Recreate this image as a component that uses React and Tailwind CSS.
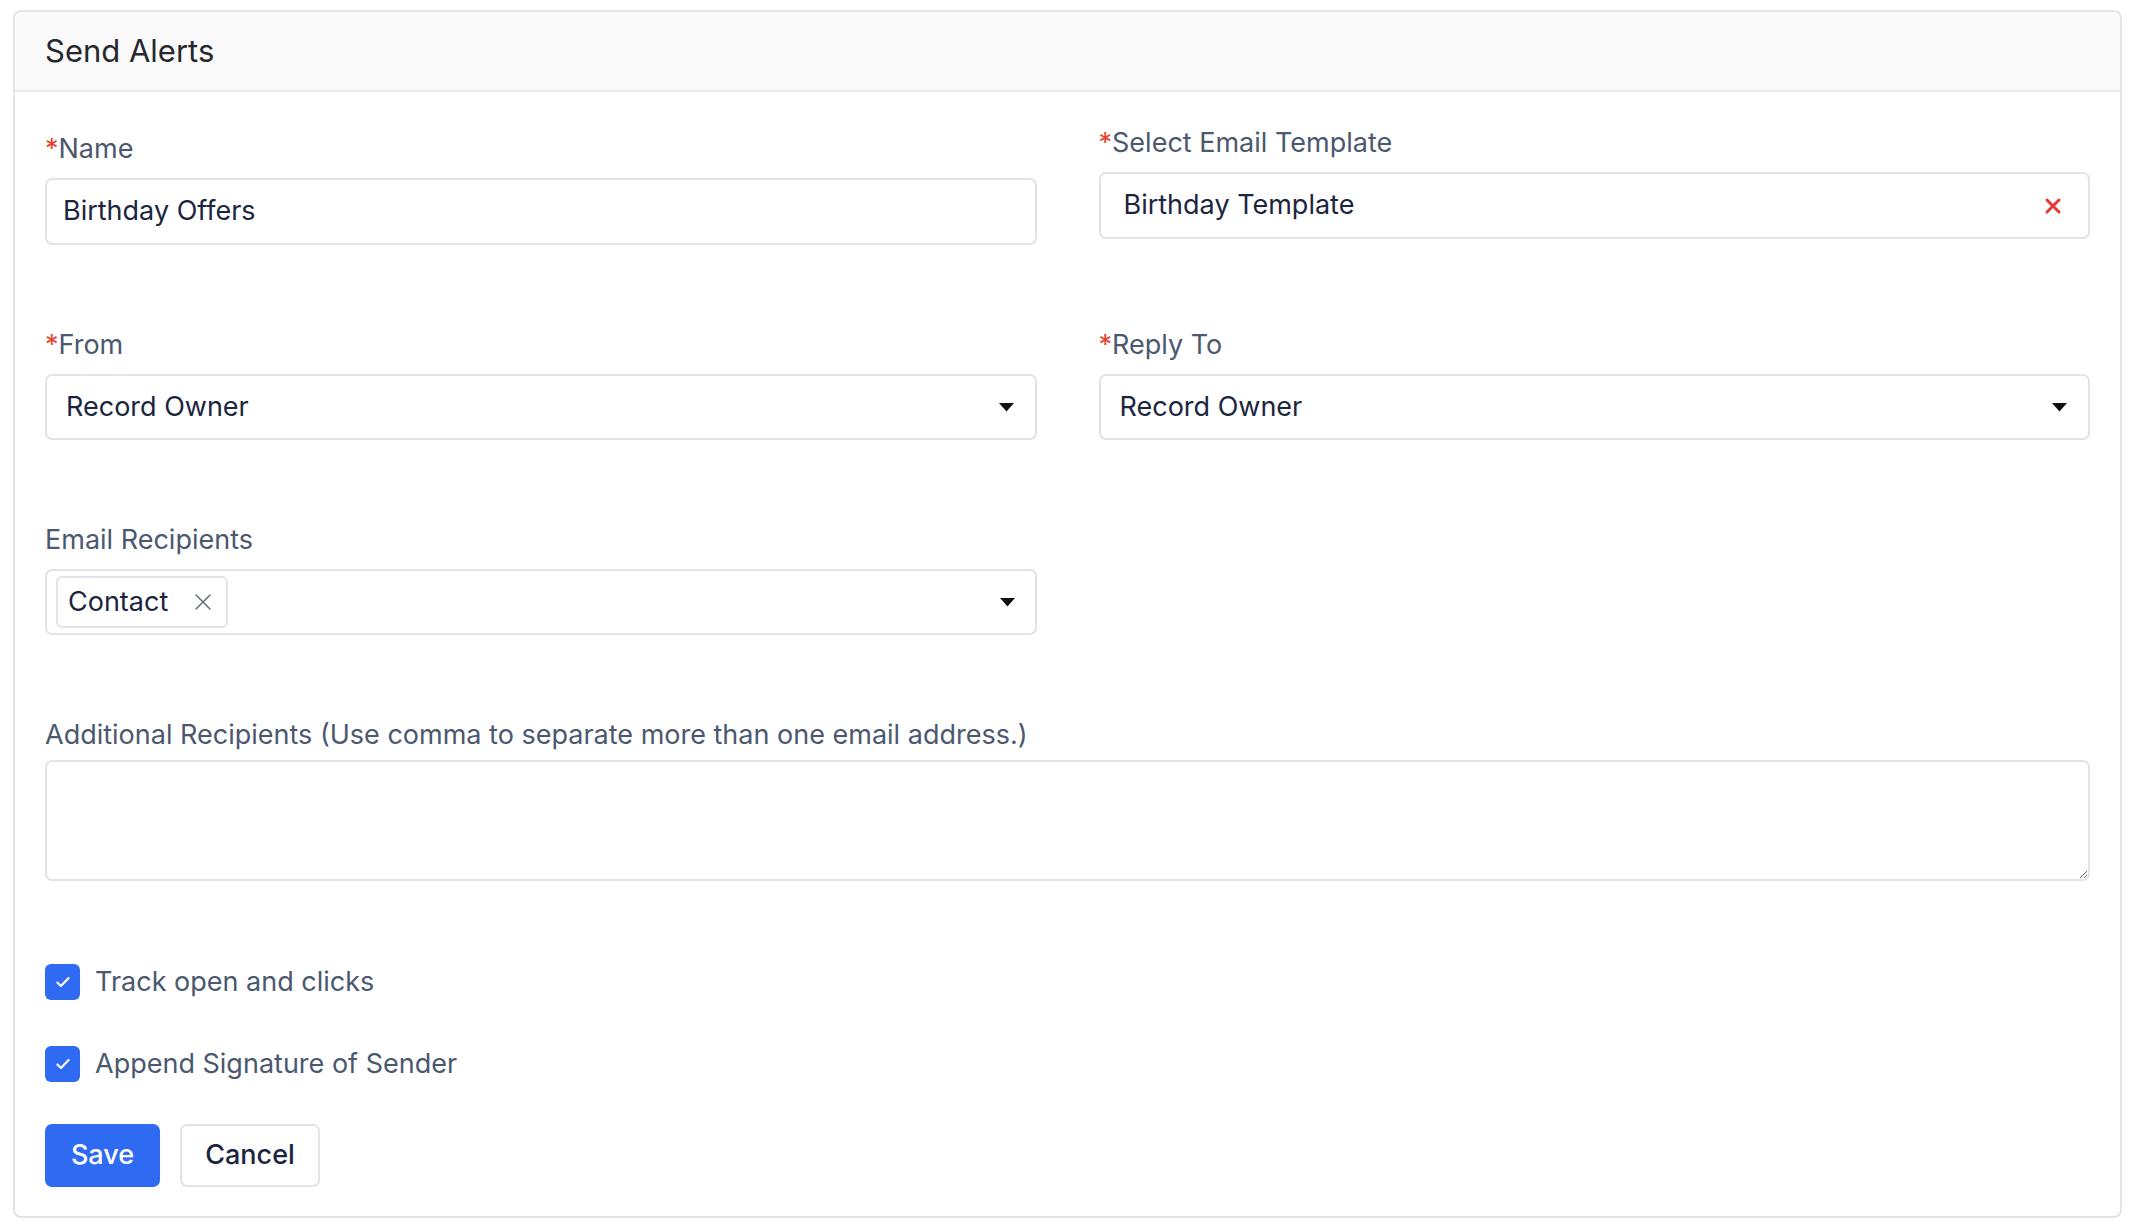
import React from "react";

const Label = ({ required, children }) => (
  <div className="h-[34px] mb-3 text-[27px] leading-[34px] text-[#4b5870]">
    {required && <span className="text-[#e5442e]">*</span>}
    {children}
  </div>
);

const Caret = () => (
  <svg width="17" height="10" viewBox="0 0 17 10" className="shrink-0">
    <path d="M1 1h15L8.5 9.5z" fill="#111" />
  </svg>
);

const Checkbox = ({ label }) => (
  <label className="h-[36px] flex items-center gap-[15px]">
    <span className="w-[35px] h-[36px] rounded-[6px] bg-[#2f6af3] flex items-center justify-center">
      <svg width="18" height="18" viewBox="0 0 16 16" fill="none">
        <path d="M3 8.5l3.2 3L13 4.5" stroke="#fff" strokeWidth="1.9" strokeLinecap="round" strokeLinejoin="round" />
      </svg>
    </span>
    <span className="text-[27px] leading-[36px] text-[#4b5870]">{label}</span>
  </label>
);

export default function App() {
  return (
    <div className="min-h-screen bg-white pl-[13px] pr-[14px] pt-[10px] font-['Inter','Noto_Sans',sans-serif]">
      <div className="border-2 border-[#e4e4e8] rounded-[8px] overflow-hidden">
        {/* Header */}
        <div className="h-[80px] bg-[#fafafa] border-b-2 border-[#ececef] px-[30px] flex items-center">
          <h1 className="text-[31px] font-normal text-[#26282e]">Send Alerts</h1>
        </div>

        <div className="px-[30px] pt-[34px] pb-[29px]">
          <div className="grid grid-cols-2 gap-x-[62px] gap-y-[83px]">
            {/* Name */}
            <div className="pt-[6px]">
              <Label required>Name</Label>
              <div className="h-[67px] border-2 border-[#e2e3e8] rounded-[7px] px-[16px] flex items-center text-[27px] text-[#1c2540]">
                Birthday Offers
              </div>
            </div>

            {/* Template */}
            <div>
              <Label required>Select Email Template</Label>
              <div className="h-[67px] border-2 border-[#e2e3e8] rounded-[7px] pl-[23px] pr-[26px] flex items-center justify-between text-[27px] text-[#1c2540]">
                <span>Birthday Template</span>
                <svg width="18" height="18" viewBox="0 0 18 18">
                  <path d="M3 3l12 12M15 3L3 15" stroke="#e53935" strokeWidth="3" strokeLinecap="round" />
                </svg>
              </div>
            </div>

            {/* From */}
            <div>
              <Label required>From</Label>
              <div className="h-[66px] border-2 border-[#e2e3e8] rounded-[7px] pl-[19px] pr-[20px] flex items-center justify-between text-[27px] text-[#1c2540]">
                <span>Record Owner</span>
                <Caret />
              </div>
            </div>

            {/* Reply To */}
            <div>
              <Label required>Reply To</Label>
              <div className="h-[66px] border-2 border-[#e2e3e8] rounded-[7px] pl-[19px] pr-[20px] flex items-center justify-between text-[27px] text-[#1c2540]">
                <span>Record Owner</span>
                <Caret />
              </div>
            </div>

            {/* Email Recipients */}
            <div>
              <Label>Email Recipients</Label>
              <div className="h-[66px] border-2 border-[#e2e3e8] rounded-[7px] pl-[9px] pr-[19px] flex items-center justify-between">
                <span className="h-[52px] border-2 border-[#e2e3e8] rounded-[6px] pl-[10px] pr-[14px] flex items-center gap-[26px] text-[27px] text-[#1c2540]">
                  Contact
                  <svg width="18" height="18" viewBox="0 0 18 18">
                    <path d="M2 2l14 14M16 2L2 16" stroke="#6b7280" strokeWidth="1.6" strokeLinecap="round" />
                  </svg>
                </span>
                <Caret />
              </div>
            </div>
            <div />

            {/* Additional Recipients */}
            <div className="col-span-2">
              <Label>Additional Recipients (Use comma to separate more than one email address.)</Label>
              <textarea className="block w-full h-[121px] -mt-[4px] border-2 border-[#e2e3e8] rounded-[7px] outline-none" />
            </div>
          </div>

          <div className="mt-[83px] flex flex-col gap-[46px]">
            <Checkbox label="Track open and clicks" />
            <Checkbox label="Append Signature of Sender" />
          </div>

          <div className="mt-[42px] flex gap-[20px]">
            <button className="h-[63px] w-[115px] rounded-[7px] bg-[#2f6af3] text-white text-[27px] font-medium">
              Save
            </button>
            <button className="h-[63px] w-[140px] rounded-[7px] border-2 border-[#e2e3e8] bg-white text-[#1c2540] text-[27px] font-medium">
              Cancel
            </button>
          </div>
        </div>
      </div>
    </div>
  );
}
